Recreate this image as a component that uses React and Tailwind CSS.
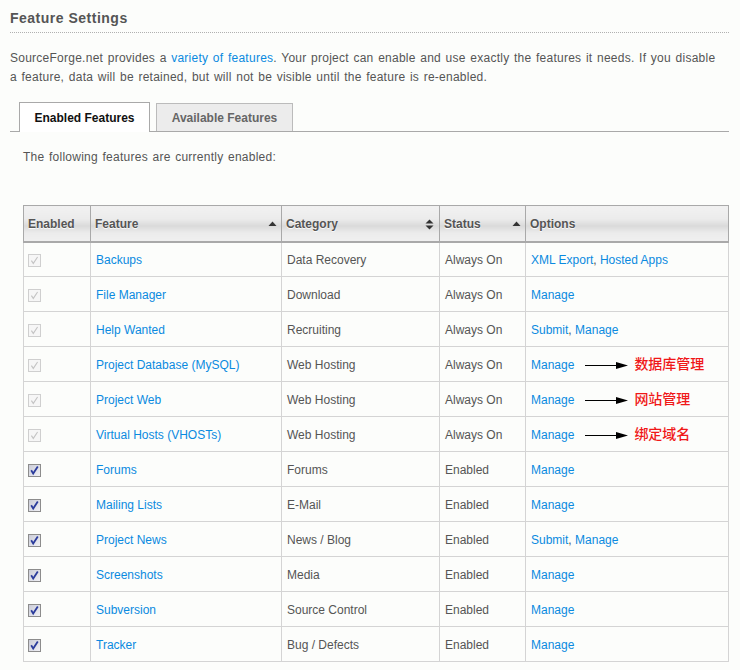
import React from "react";

const rows = [
  { on: "disabled", name: "Backups", cat: "Data Recovery", status: "Always On", opts: ["XML Export", "Hosted Apps"] },
  { on: "disabled", name: "File Manager", cat: "Download", status: "Always On", opts: ["Manage"] },
  { on: "disabled", name: "Help Wanted", cat: "Recruiting", status: "Always On", opts: ["Submit", "Manage"] },
  { on: "disabled", name: "Project Database (MySQL)", cat: "Web Hosting", status: "Always On", opts: ["Manage"], note: "数据库管理" },
  { on: "disabled", name: "Project Web", cat: "Web Hosting", status: "Always On", opts: ["Manage"], note: "网站管理" },
  { on: "disabled", name: "Virtual Hosts (VHOSTs)", cat: "Web Hosting", status: "Always On", opts: ["Manage"], note: "绑定域名" },
  { on: "on", name: "Forums", cat: "Forums", status: "Enabled", opts: ["Manage"] },
  { on: "on", name: "Mailing Lists", cat: "E-Mail", status: "Enabled", opts: ["Manage"] },
  { on: "on", name: "Project News", cat: "News / Blog", status: "Enabled", opts: ["Submit", "Manage"] },
  { on: "on", name: "Screenshots", cat: "Media", status: "Enabled", opts: ["Manage"] },
  { on: "on", name: "Subversion", cat: "Source Control", status: "Enabled", opts: ["Manage"] },
  { on: "on", name: "Tracker", cat: "Bug / Defects", status: "Enabled", opts: ["Manage"] },
];

function Check({ on }) {
  if (on === "on") {
    return (
      <svg width="13" height="13" viewBox="0 0 13 13" className="block">
        <defs>
          <linearGradient id="cbg" x1="0" y1="0" x2="1" y2="1">
            <stop offset="0" stopColor="#c9cbd6" />
            <stop offset="1" stopColor="#f2f2f6" />
          </linearGradient>
        </defs>
        <rect x="0.5" y="0.5" width="12" height="12" fill="url(#cbg)" stroke="#8c8c8c" />
        <path d="M3.2 6.3 L5.2 9.6 L9.8 2.6" fill="none" stroke="#2b3c9c" strokeWidth="1.8" />
      </svg>
    );
  }
  return (
    <svg width="13" height="13" viewBox="0 0 13 13" className="block">
      <rect x="0.5" y="0.5" width="12" height="12" fill="#f6f6f6" stroke="#cfcfcf" />
      <path d="M3.4 6.6 L5.3 9.4 L9.6 3" fill="none" stroke="#c4c4c4" strokeWidth="1.1" />
    </svg>
  );
}

function Arrow() {
  return (
    <svg width="44" height="9" viewBox="0 0 44 9" className="block">
      <line x1="0" y1="4.5" x2="33" y2="4.5" stroke="#000" strokeWidth="1.2" />
      <polygon points="31,1 43,4.5 31,8" fill="#000" />
    </svg>
  );
}

function Up() {
  return (
    <svg width="9" height="6" viewBox="0 0 9 6" className="block">
      <polygon points="4.5,0.5 8.5,5 0.5,5" fill="#333" />
    </svg>
  );
}

function Both() {
  return (
    <svg width="9" height="11" viewBox="0 0 9 11" className="block">
      <polygon points="4.5,0.5 8.5,4.5 0.5,4.5" fill="#333" />
      <polygon points="4.5,10.5 8.5,6.5 0.5,6.5" fill="#333" />
    </svg>
  );
}

const hd =
  "h-[36px] border border-[#a9a9a9] px-[4px] pt-[2px] text-left align-middle font-bold text-[#555] [text-shadow:0_1px_1px_#fff] bg-[linear-gradient(to_bottom,#f1f1f1_0%,#ececec_35%,#dadada_56%,#ebebeb_75%,#f0f0f0_100%)]";
const td = "h-[35px] border border-[#d4d4d4] px-[5px] pt-[2px] align-middle";

export default function App() {
  return (
    <div
      className="min-h-[670px] w-[740px] bg-[#fcfdfb] px-[10px] text-[12px] text-[#555]"
      style={{ fontFamily: '"Liberation Sans", Arial, sans-serif' }}
    >
      <div className="w-[719px] border-b border-dotted border-[#b0b0b0] pt-[8px] pb-[4px]">
        <h1 className="text-[14px] font-bold leading-[20px] tracking-[0.5px] text-[#555]">Feature Settings</h1>
      </div>
      <p className="mt-[16px] w-[714px] leading-[19px] tracking-[0.25px] [word-spacing:1px]">
        SourceForge.net provides a <a className="text-[#0a8ae0]">variety of features</a>. Your project can enable and use exactly the features it needs. If you disable a feature, data will be retained, but will not be visible until the feature is re-enabled.
      </p>
      <div className="mt-[15px] flex w-[719px] items-end gap-[6px] border-b border-[#a9a9a9] pl-[9px]">
        <div className="-mb-px flex h-[30px] w-[131px] items-center justify-center border border-b-0 border-[#a9a9a9] bg-white font-bold text-[#111]">
          Enabled Features
        </div>
        <div className="flex h-[28px] w-[137px] items-center justify-center border border-b-0 border-[#bbb] bg-[#ececec] font-bold text-[#666]">
          Available Features
        </div>
      </div>
      <p className="mt-[16px] ml-[13px] leading-[19px] tracking-[0.25px] [word-spacing:1px]">The following features are currently enabled:</p>
      <table className="mt-[38px] ml-[13px] w-[705px] table-fixed border-collapse">
        <colgroup>
          <col className="w-[67px]" />
          <col className="w-[191px]" />
          <col className="w-[158px]" />
          <col className="w-[86px]" />
          <col className="w-[203px]" />
        </colgroup>
        <thead>
          <tr className="border-b-2 border-[#a9a9a9]">
            <th className={hd}>Enabled</th>
            <th className={hd}>
              <div className="flex items-center justify-between pr-0">
                <span>Feature</span>
                <Up />
              </div>
            </th>
            <th className={hd}>
              <div className="flex items-center justify-between pr-[1px]">
                <span>Category</span>
                <Both />
              </div>
            </th>
            <th className={hd}>
              <div className="flex items-center justify-between pr-0">
                <span>Status</span>
                <Up />
              </div>
            </th>
            <th className={hd}>Options</th>
          </tr>
        </thead>
        <tbody>
          {rows.map((r) => (
            <tr key={r.name}>
              <td className={td + " pl-[4px] pt-0"}>
                <Check on={r.on} />
              </td>
              <td className={td + " text-[#0a8ae0]"}>{r.name}</td>
              <td className={td}>{r.cat}</td>
              <td className={td}>{r.status}</td>
              <td className={td}>
                <div className="flex items-center">
                  <span className="text-[#0a8ae0]">
                    {r.opts.map((o, i) => (
                      <React.Fragment key={o}>
                        {i > 0 && <span className="text-[#555]">, </span>}
                        {o}
                      </React.Fragment>
                    ))}
                  </span>
                  {r.note && (
                    <span className="ml-[11px] flex items-center gap-[5px]">
                      <Arrow />
                      <span
                        className="-mt-[4px] text-[14px] font-medium leading-none text-[#f01818]"
                        style={{ fontFamily: '"Noto Sans CJK SC", sans-serif' }}
                      >
                        {r.note}
                      </span>
                    </span>
                  )}
                </div>
              </td>
            </tr>
          ))}
        </tbody>
      </table>
    </div>
  );
}
